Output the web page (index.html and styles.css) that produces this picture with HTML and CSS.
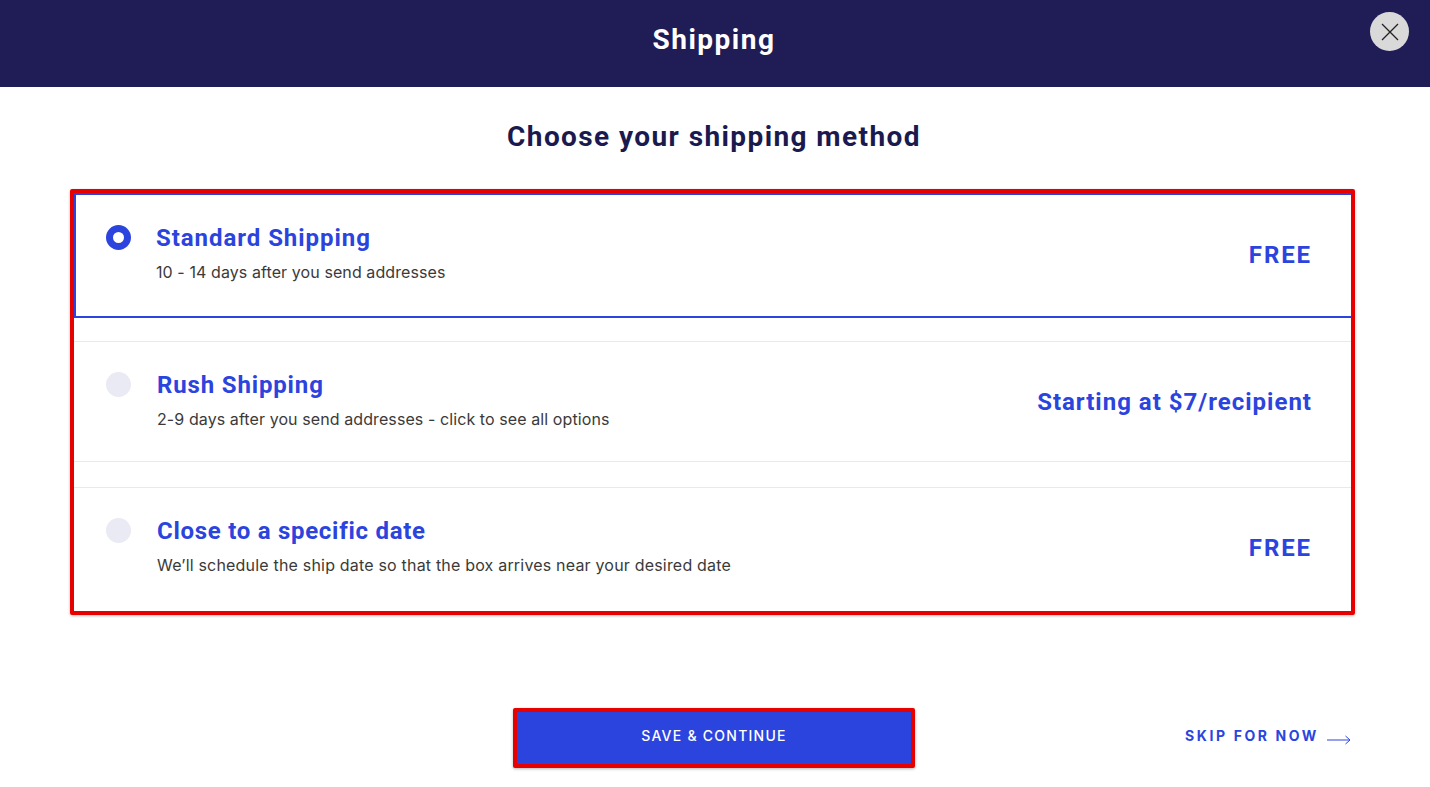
FILE: index.html
```html
<!DOCTYPE html>
<html lang="en">
<head>
<meta charset="utf-8">
<title>Shipping</title>
<link rel="stylesheet" href="styles.css">
</head>
<body>
<header class="topbar">
  <h1 class="topbar-title">Shipping</h1>
  <button class="close" aria-label="Close">
    <svg width="20" height="20" viewBox="0 0 20 20"><path d="M2 2L18 18M18 2L2 18" stroke="#222" stroke-width="1.3" fill="none"/></svg>
  </button>
</header>
<main class="content">
  <h2 class="heading">Choose your shipping method</h2>
  <div class="options">
    <div class="option selected">
      <span class="radio on"></span>
      <div class="info"><div class="name">Standard Shipping</div><div class="desc">10 - 14 days after you send addresses</div></div>
      <div class="price caps">FREE</div>
    </div>
    <div class="option middle">
      <span class="radio"></span>
      <div class="info"><div class="name">Rush Shipping</div><div class="desc">2-9 days after you send addresses - click to see all options</div></div>
      <div class="price">Starting at $7/recipient</div>
    </div>
    <div class="option last">
      <span class="radio"></span>
      <div class="info"><div class="name tight">Close to a specific date</div><div class="desc wide">We’ll schedule the ship date so that the box arrives near your desired date</div></div>
      <div class="price caps">FREE</div>
    </div>
  </div>
  <div class="actions">
    <button class="save">SAVE &amp; CONTINUE</button>
    <a class="skip"><span class="skip-label">SKIP FOR NOW</span>
      <svg class="skip-arrow" width="24" height="10" viewBox="0 0 24 10"><path d="M0 5H23M18.5 1L23 5L18.5 9" stroke="#2c44de" stroke-width="1" fill="none"/></svg>
    </a>
  </div>
</main>
</body>
</html>
```
FILE: styles.css
```css
* { box-sizing: border-box; }
html, body { margin: 0; padding: 0; height: 787px; overflow: hidden; background: #fff; }
body { font-family: "Inter", "Liberation Sans", sans-serif; color: #333; }
.topbar { height: 87px; padding-right: 2px; background: #1f1c56; display: flex; align-items: center; justify-content: center; position: relative; }
.topbar-title { margin: 0 0 8px; font-size: 28px; font-weight: 700; color: #fff; font-family: "Roboto", sans-serif; letter-spacing: 1.5px; }
.close { position: absolute; left: 1370px; top: 12px; width: 39px; height: 39px; border-radius: 50%; border: 0; padding: 0; background: #d9d9d9; display: flex; align-items: center; justify-content: center; }
.heading { margin: 33px 0 35px; padding-right: 2px; height: 34px; line-height: 34px; text-align: center; font-family: "Roboto", sans-serif; font-size: 28px; font-weight: 700; letter-spacing: 1.41px; color: #1a1a4e; }
.options { margin: 0 75px 0 70px; border: 4px solid #e60000; border-radius: 2px; box-shadow: 0 1px 3px rgba(0,0,0,.25); }
.option { display: flex; align-items: flex-start; padding: 30px 39px 0 32px; }
.selected { height: 125px; border: 2px solid #2c44de; border-right: 0; padding-left: 30px; }
.middle { height: 121px; margin-top: 23px; border-top: 1px solid #e8e8ee; border-bottom: 1px solid #e8e8ee; }
.last { height: 124px; margin-top: 25px; border-top: 1px solid #e8e8ee; }
.radio { width: 25px; height: 25px; border-radius: 50%; background: #e9eaf3; flex: none; }
.radio.on { background: #fff; border: 7.5px solid #2c44de; }
.info { margin: -1px 0 0 26px; flex: 1; }
.selected .info { margin-left: 25px; }
.name { font-family: "Roboto", sans-serif; font-size: 24px; line-height: 28px; font-weight: 700; letter-spacing: .85px; color: #2c44de; }
.selected .name { letter-spacing: .95px; }
.name.tight { letter-spacing: .72px; }
.desc { margin-top: 9px; font-size: 16px; line-height: 22px; letter-spacing: .09px; color: #3a3a3a; }
.desc.wide { letter-spacing: .19px; }
.price { align-self: center; margin-top: -29px; font-family: "Roboto", sans-serif; font-size: 24px; font-weight: 700; letter-spacing: 1px; color: #2c44de; }
.price.caps { margin-top: -31px; letter-spacing: 1.9px; }
.last .price.caps { margin-top: -33px; }
.actions { display: grid; grid-template-columns: 402px 1fr; align-items: center; margin-top: 93px; padding: 0 79px 0 513px; }
.save { height: 60px; padding: 0 0 5px; background: #2c44de; border: 4px solid #e60000; border-radius: 2px; box-shadow: 0 1px 3px rgba(0,0,0,.3); color: #fff; font-family: "Inter", sans-serif; font-size: 14px; font-weight: 500; letter-spacing: 1.25px; }
.skip { justify-self: end; display: flex; align-items: flex-start; gap: 8px; height: 24px; color: #2c44de; font-family: "Inter", sans-serif; font-size: 14px; font-weight: 700; letter-spacing: 2.6px; }
.skip-label { line-height: 17px; margin-top: .5px; }
.skip-arrow { margin-top: 8.5px; }
```
